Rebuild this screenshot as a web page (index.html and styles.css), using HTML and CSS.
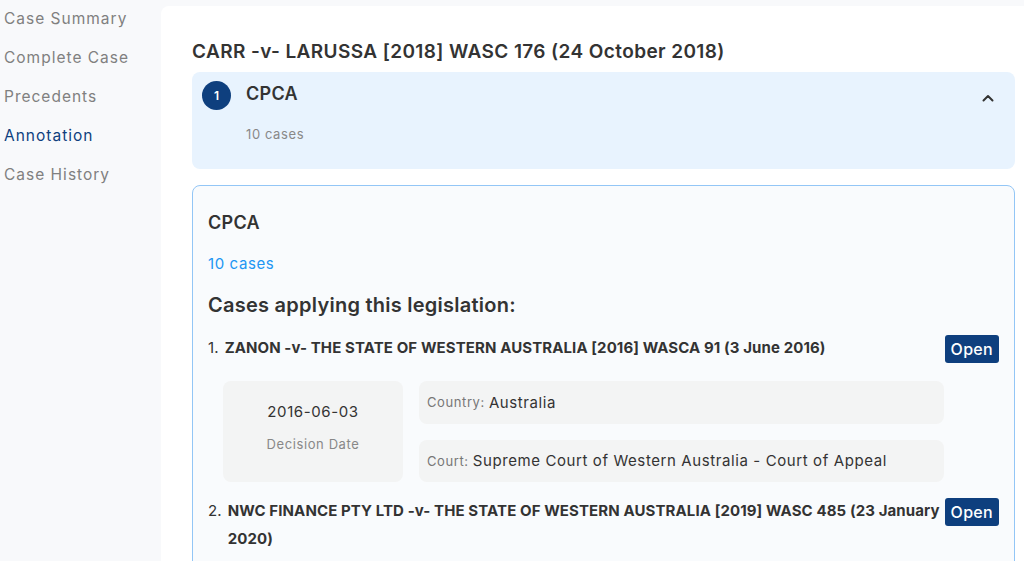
FILE: index.html
```html
<!DOCTYPE html>
<html lang="en">
<head>
    <meta charset="UTF-8">
    <meta name="viewport" content="width=device-width, initial-scale=1.0">
    <title>CARR -v- LARUSSA - Annotation</title>
    <link rel="stylesheet" href="styles.css">
</head>
<body>
    <nav class="sidebar">
        <a class="nav-link" href="#">Case Summary</a>
        <a class="nav-link" href="#">Complete Case</a>
        <a class="nav-link" href="#">Precedents</a>
        <a class="nav-link active" href="#">Annotation</a>
        <a class="nav-link" href="#">Case History</a>
    </nav>

    <main class="main">
        <h1 class="case-title">CARR -v- LARUSSA [2018] WASC 176 (24 October 2018)</h1>

        <div class="acc-header">
            <span class="badge">1</span>
            <div class="acc-text">
                <div class="acc-title">CPCA</div>
                <div class="acc-count">10 cases</div>
            </div>
            <svg class="chevron" width="12" height="8" viewBox="0 0 12 8">
                <path d="M1.5 6.5 L6 2 L10.5 6.5" fill="none" stroke="#333" stroke-width="2" stroke-linecap="round" stroke-linejoin="round"/>
            </svg>
        </div>

        <section class="panel">
            <h3 class="panel-title">CPCA</h3>
            <a class="panel-count" href="#">10 cases</a>
            <h2 class="panel-heading">Cases applying this legislation:</h2>

            <div class="case-item">
                <div class="case-body">
                    <div class="case-name">
                        <span class="num">1.</span>
                        <span class="name">ZANON -v- THE STATE OF WESTERN AUSTRALIA [2016] WASCA 91 (3 June 2016)</span>
                    </div>
                    <div class="details">
                        <div class="date-box">
                            <div class="date">2016-06-03</div>
                            <div class="date-label">Decision Date</div>
                        </div>
                        <div class="info">
                            <div class="info-box"><span class="label">Country:</span> Australia</div>
                            <div class="info-box"><span class="label">Court:</span> Supreme Court of Western Australia - Court of Appeal</div>
                        </div>
                    </div>
                </div>
                <button class="btn-open">Open</button>
            </div>

            <div class="case-item">
                <div class="case-body">
                    <div class="case-name">
                        <span class="num">2.</span>
                        <span class="name">NWC FINANCE PTY LTD -v- THE STATE OF WESTERN AUSTRALIA [2019] WASC 485 (23 January 2020)</span>
                    </div>
                </div>
                <button class="btn-open">Open</button>
            </div>
        </section>
    </main>
</body>
</html>
```

FILE: styles.css
```css
body {
    font-family: Inter, "Open Sans", sans-serif;
    letter-spacing: 0.6px;
    margin: 0;
    padding: 0;
    background: #f8f9fb;
    color: #333;
    display: flex;
    height: 561px;
    overflow: hidden;
}
.sidebar {
    width: 161px;
    flex-shrink: 0;
}
.nav-link {
    display: block;
    padding: 8px 4px 9px;
    line-height: 22px;
    font-size: 15.5px;
    letter-spacing: 1px;
    color: #808080;
    text-decoration: none;
}
.nav-link.active {
    color: #0e3f7e;
}
.main {
    flex: 1;
    margin-top: 6px;
    background: white;
    border-radius: 8px 0 0 0;
    padding: 32px 9px 0 31px;
}
.case-title {
    font-size: 19px;
    font-weight: 600;
    letter-spacing: 0.4px;
    line-height: 28px;
    margin: 0 0 6px;
}
.acc-header {
    display: flex;
    align-items: flex-start;
    background: #e8f3fe;
    border-radius: 8px;
    padding: 9px 10px 25px;
}
.badge {
    width: 29px;
    height: 29px;
    border-radius: 50%;
    background: #0e3f7e;
    color: white;
    font-size: 12px;
    font-weight: 600;
    letter-spacing: 0;
    display: flex;
    align-items: center;
    justify-content: center;
    margin-right: 15px;
}
.acc-text {
    flex: 1;
}
.acc-title {
    font-size: 18px;
    font-weight: 600;
    letter-spacing: 0.3px;
    line-height: 26px;
}
.acc-count {
    margin-top: 17px;
    font-size: 13px;
    line-height: 20px;
    color: #888;
}
.chevron {
    margin: 13px 11px 0 0;
}
.panel {
    margin-top: 16px;
    border: 1px solid #93c6f6;
    border-radius: 8px;
    background: #f9fbfd;
    padding: 24px 15px 0 15px;
    height: 380px;
}
.panel-title {
    margin: 0;
    font-size: 18px;
    font-weight: 600;
    letter-spacing: 0.3px;
    line-height: 26px;
}
.panel-count {
    display: block;
    margin-top: 17px;
    font-size: 15px;
    line-height: 22px;
    color: #2196f3;
    text-decoration: none;
}
.panel-heading {
    margin: 16px 0 15px;
    font-size: 20px;
    font-weight: 600;
    letter-spacing: 0.25px;
    line-height: 28px;
}
.case-item {
    display: flex;
    align-items: flex-start;
    margin-bottom: 15px;
}
.case-body {
    flex: 1;
}
.case-name {
    display: flex;
    gap: 6px;
    font-size: 15px;
    letter-spacing: 0.1px;
    line-height: 28px;
}
.num {
    font-weight: 400;
}
.name {
    flex: 1;
    font-weight: 700;
}
.details {
    display: flex;
    gap: 16px;
    margin: 19px 0 0 15px;
}
.date-box {
    width: 180px;
    height: 101px;
    box-sizing: border-box;
    padding-top: 20px;
    background: #f3f4f4;
    border-radius: 8px;
    text-align: center;
}
.date {
    font-size: 15px;
    line-height: 22px;
}
.date-label {
    margin-top: 11px;
    font-size: 13px;
    line-height: 20px;
    color: #888;
}
.info {
    flex: 1;
    display: flex;
    flex-direction: column;
    gap: 16px;
}
.info-box {
    height: 42.5px;
    display: flex;
    align-items: center;
    gap: 4px;
    padding: 0 8px;
    background: #f3f4f4;
    border-radius: 8px;
    font-size: 15px;
}
.label {
    font-size: 13px;
    color: #777;
}
.btn-open {
    margin: 1px 0 0 1px;
    background: #0e3f7e;
    color: white;
    border: none;
    border-radius: 3px;
    height: 28px;
    padding: 0 6px;
    font-family: inherit;
    font-size: 16px;
    font-weight: 500;
    letter-spacing: 0.3px;
    cursor: pointer;
}
```
